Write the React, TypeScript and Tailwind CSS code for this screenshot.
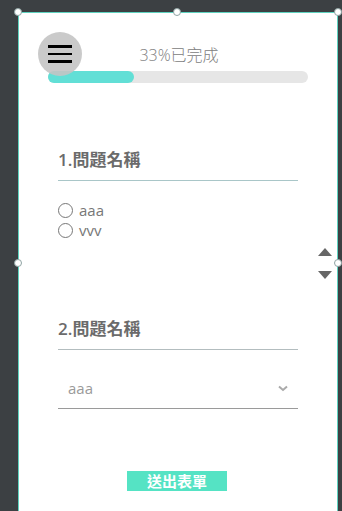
const Handle = ({ className }: { className: string }) => (
  <span
    className={`absolute w-[8px] h-[8px] rounded-full bg-white border border-[#8fa3a3] ${className}`}
  />
);

const App = () => {
  return (
    <div
      className="w-[342px] h-[511px] overflow-hidden bg-[#3c4043] pt-[12px] pl-[18px] pr-[4px]"
      style={{ fontFamily: '"Open Sans", "Noto Sans CJK TC", sans-serif' }}
    >
      <div className="relative h-[520px] bg-white border-l border-t border-r border-[#5fd3c0]">
        <Handle className="-left-[5px] -top-[5px]" />
        <Handle className="left-[154px] -top-[5px]" />
        <Handle className="-right-[5px] -top-[5px]" />
        <Handle className="-left-[5px] top-[246px]" />
        <Handle className="-right-[5px] top-[246px]" />

        {/* scroll arrows */}
        <div className="absolute right-[5px] top-[235px] flex flex-col gap-[15px]">
          <span className="w-0 h-0 border-l-[7px] border-r-[7px] border-b-[8px] border-l-transparent border-r-transparent border-b-[#666]" />
          <span className="w-0 h-0 border-l-[7px] border-r-[7px] border-t-[8px] border-l-transparent border-r-transparent border-t-[#666]" />
        </div>

        {/* progress */}
        <div className="relative px-[29px] pt-[31px]">
          <p className="text-center text-[16px] leading-[22px] font-light text-[#808080] pl-[2px]">33%已完成</p>
          <div className="mt-[5px] h-[12px] w-[260px] rounded-full bg-[#e6e6e6]">
            <div className="h-full w-[86px] rounded-full bg-[#62dfd6]" />
          </div>
          <button className="absolute left-[19px] top-[19px] w-[44px] h-[44px] rounded-full bg-[#c4c4c4]/90 flex flex-col items-center justify-center gap-[5px]">
            <span className="block w-[24px] h-[2.5px] bg-black" />
            <span className="block w-[24px] h-[2.5px] bg-black" />
            <span className="block w-[24px] h-[2.5px] bg-black" />
          </button>
        </div>

        {/* question 1 */}
        <div className="mx-[39px] mt-[65px]">
          <h3 className="text-[17px] leading-[24px] font-semibold text-[#6b6b6b] pb-[8px] border-b border-[#a9c6c8]">1.問題名稱</h3>
          <div className="mt-[19px] text-[15px] leading-[20px] text-[#777]">
            <label className="flex items-center gap-[6px]">
              <span className="w-[15px] h-[15px] rounded-full border-[1.5px] border-[#777]" />
              aaa
            </label>
            <label className="flex items-center gap-[6px]">
              <span className="w-[15px] h-[15px] rounded-full border-[1.5px] border-[#777]" />
              vvv
            </label>
          </div>
        </div>

        {/* question 2 */}
        <div className="mx-[39px] mt-[77px]">
          <h3 className="text-[17px] leading-[24px] font-semibold text-[#6b6b6b] pb-[8px] border-b border-[#b3bdbf]">2.問題名稱</h3>
          <div className="mt-[27px] flex items-center justify-between pl-[10px] pr-[10px] pb-[8px] border-b border-[#9a9a9a]">
            <span className="text-[15px] text-[#9a9a9a]">aaa</span>
            <svg width="10" height="7" viewBox="0 0 10 7">
              <path d="M1 1.5 L5 5 L9 1.5" fill="none" stroke="#aaa" strokeWidth="2" />
            </svg>
          </div>
        </div>

        {/* submit */}
        <div className="flex justify-center mt-[62px] pr-[2px]">
          <button className="w-[100px] h-[20px] bg-[#55e3c4] text-white text-[15px] leading-[20px] font-bold">
            送出表單
          </button>
        </div>
      </div>
    </div>
  );
};

export default App;
